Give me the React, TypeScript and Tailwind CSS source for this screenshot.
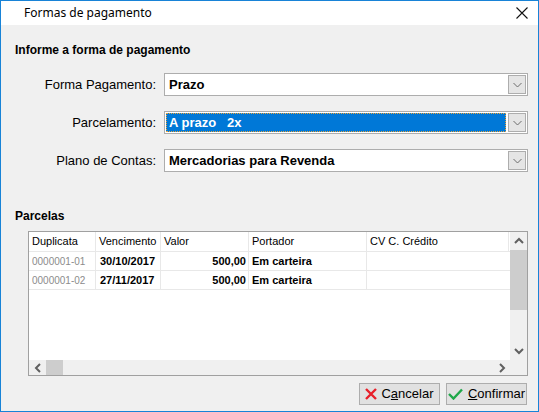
import React from 'react';

const arial = { fontFamily: '"Liberation Sans", Arial, sans-serif' };

function ComboArrow() {
  return (
    <div className="flex h-full w-[18px] items-center justify-center border border-[#adadad] bg-[#e5e5e5]">
      <svg width="9" height="6" viewBox="0 0 9 6">
        <path d="M0.5 1 L4.5 5 L8.5 1" fill="none" stroke="#6d6d6d" strokeWidth="1" />
      </svg>
    </div>
  );
}

function Combo({ value, selected }: { value: string; selected?: boolean }) {
  return (
    <div className="flex h-[23px] flex-1 items-stretch border border-[#adadad] bg-white p-px">
      <div
        className={`flex flex-1 items-center whitespace-pre pl-[3px] text-[13px] font-bold ${
          selected ? 'bg-[#0078d7] text-white outline-1 outline-dotted outline-[#e8a33b] -outline-offset-1' : 'text-black'
        }`}
      >
        {value}
      </div>
      <div className="ml-[2px] h-[19px]">
        <ComboArrow />
      </div>
    </div>
  );
}

function Row({ label, value, selected }: { label: string; value: string; selected?: boolean }) {
  return (
    <div className="flex items-center">
      <div className="w-[156px] pr-[1px] text-right text-[13px] text-black">{label}</div>
      <div className="ml-[7px] flex flex-1">
        <Combo value={value} selected={selected} />
      </div>
    </div>
  );
}

const cols = [
  { title: 'Duplicata', w: 'w-[67px]' },
  { title: 'Vencimento', w: 'w-[65px]' },
  { title: 'Valor', w: 'w-[88px]' },
  { title: 'Portador', w: 'w-[118px]' },
  { title: 'CV C. Crédito', w: 'w-[142px]' },
];

const parcelas = [
  { dup: '0000001-01', venc: '30/10/2017', valor: '500,00', port: 'Em carteira' },
  { dup: '0000001-02', venc: '27/11/2017', valor: '500,00', port: 'Em carteira' },
];

function Chevron({ dir }: { dir: 'up' | 'down' | 'left' | 'right' }) {
  const d = {
    up: 'M1 6 L5 2 L9 6',
    down: 'M1 2 L5 6 L9 2',
    left: 'M6 1 L2 5 L6 9',
    right: 'M2 1 L6 5 L2 9',
  }[dir];
  const horiz = dir === 'up' || dir === 'down';
  return (
    <svg width={horiz ? 10 : 8} height={horiz ? 8 : 10} viewBox={horiz ? '0 0 10 8' : '0 0 8 10'}>
      <path d={d} fill="none" stroke="#606060" strokeWidth="2" />
    </svg>
  );
}

function Grid() {
  return (
    <div className="ml-[27px] mr-[10px] flex h-[145px] flex-col border border-[#a0a0a0] bg-white">
      <div className="flex flex-1">
        <div className="flex flex-1 flex-col">
          <div className="flex h-[20px] border-b border-[#e8e8e8]">
            {cols.map(c => (
              <div key={c.title} className={`${c.w} flex items-center border-r border-[#e8e8e8] pl-[3px] text-[11px] text-black`}>
                {c.title}
              </div>
            ))}
          </div>
          {parcelas.map(p => (
            <div key={p.dup} className="flex h-[19px] border-b border-[#e8e8e8] text-[11px]">
              <div className="flex w-[67px] items-center border-r border-[#e8e8e8] pl-[3px] text-[10px] text-[#8c8c8c]">{p.dup}</div>
              <div className="flex w-[65px] items-center border-r border-[#e8e8e8] pl-[4px] font-bold text-black">{p.venc}</div>
              <div className="flex w-[88px] items-center justify-end border-r border-[#e8e8e8] pr-[2px] font-bold text-black">{p.valor}</div>
              <div className="flex w-[118px] items-center border-r border-[#e8e8e8] pl-[3px] font-bold text-black">{p.port}</div>
              <div className="w-[142px]" />
            </div>
          ))}
        </div>
        <div className="flex w-[17px] flex-col bg-[#f0f0f0]">
          <div className="flex h-[18px] items-center justify-center">
            <Chevron dir="up" />
          </div>
          <div className="h-[60px] bg-[#cdcdcd]" />
          <div className="flex-1" />
          <div className="flex h-[18px] items-center justify-center">
            <Chevron dir="down" />
          </div>
        </div>
      </div>
      <div className="flex h-[15px] bg-[#f0f0f0]">
        <div className="flex w-[17px] items-center justify-center">
          <Chevron dir="left" />
        </div>
        <div className="w-[17px] bg-[#cdcdcd]" />
        <div className="flex-1" />
        <div className="flex w-[17px] items-center justify-center">
          <Chevron dir="right" />
        </div>
        <div className="w-[17px]" />
      </div>
    </div>
  );
}

export default function App() {
  return (
    <div className="h-[412px] w-[539px] border border-[#1883d7] bg-[#f0f0f0]" style={arial}>
      <div className="flex h-[24px] items-center justify-between bg-white">
        <span className="ml-[23px] text-[12px] text-black" style={{ fontFamily: '"Noto Sans", "Open Sans", sans-serif' }}>
          Formas de pagamento
        </span>
        <svg width="12" height="12" viewBox="0 0 12 12" className="mr-[10px]">
          <path d="M0.5 0.5 L11.5 11.5 M11.5 0.5 L0.5 11.5" stroke="#111" strokeWidth="1.1" />
        </svg>
      </div>

      <div className="pt-[16px]">
        <div className="ml-[14px] text-[12px] font-bold text-black">Informe a forma de pagamento</div>
        <div className="mr-[10px] mt-[14px] flex flex-col gap-[15px]">
          <Row label="Forma Pagamento:" value="Prazo" />
          <Row label="Parcelamento:" value="A prazo   2x" selected />
          <Row label="Plano de Contas:" value="Mercadorias para Revenda" />
        </div>

        <div className="ml-[14px] mt-[35px] text-[12px] font-bold text-black">Parcelas</div>
        <div className="mt-[6px]">
          <Grid />
        </div>

        <div className="mr-[11px] mt-[7px] flex justify-end gap-[6px]">
          <button className="flex h-[22px] w-[81px] items-center justify-center gap-[4px] border border-[#adadad] bg-[#e1e1e1] text-[13px] text-black">
            <svg width="12" height="12" viewBox="0 0 12 12">
              <path d="M1 1 L11 11 M11 1 L1 11" stroke="#e8202a" strokeWidth="2.4" />
            </svg>
            <span>
              C<span className="underline">a</span>ncelar
            </span>
          </button>
          <button className="flex h-[22px] w-[81px] items-center justify-center gap-[5px] border border-[#adadad] bg-[#e1e1e1] text-[13px] text-black">
            <svg width="15" height="12" viewBox="0 0 15 12">
              <path d="M1 6 L5.5 10.5 L14 1.5" fill="none" stroke="#1fa84a" strokeWidth="2.4" />
            </svg>
            <span>
              <span className="underline">C</span>onfirmar
            </span>
          </button>
        </div>
      </div>
    </div>
  );
}
